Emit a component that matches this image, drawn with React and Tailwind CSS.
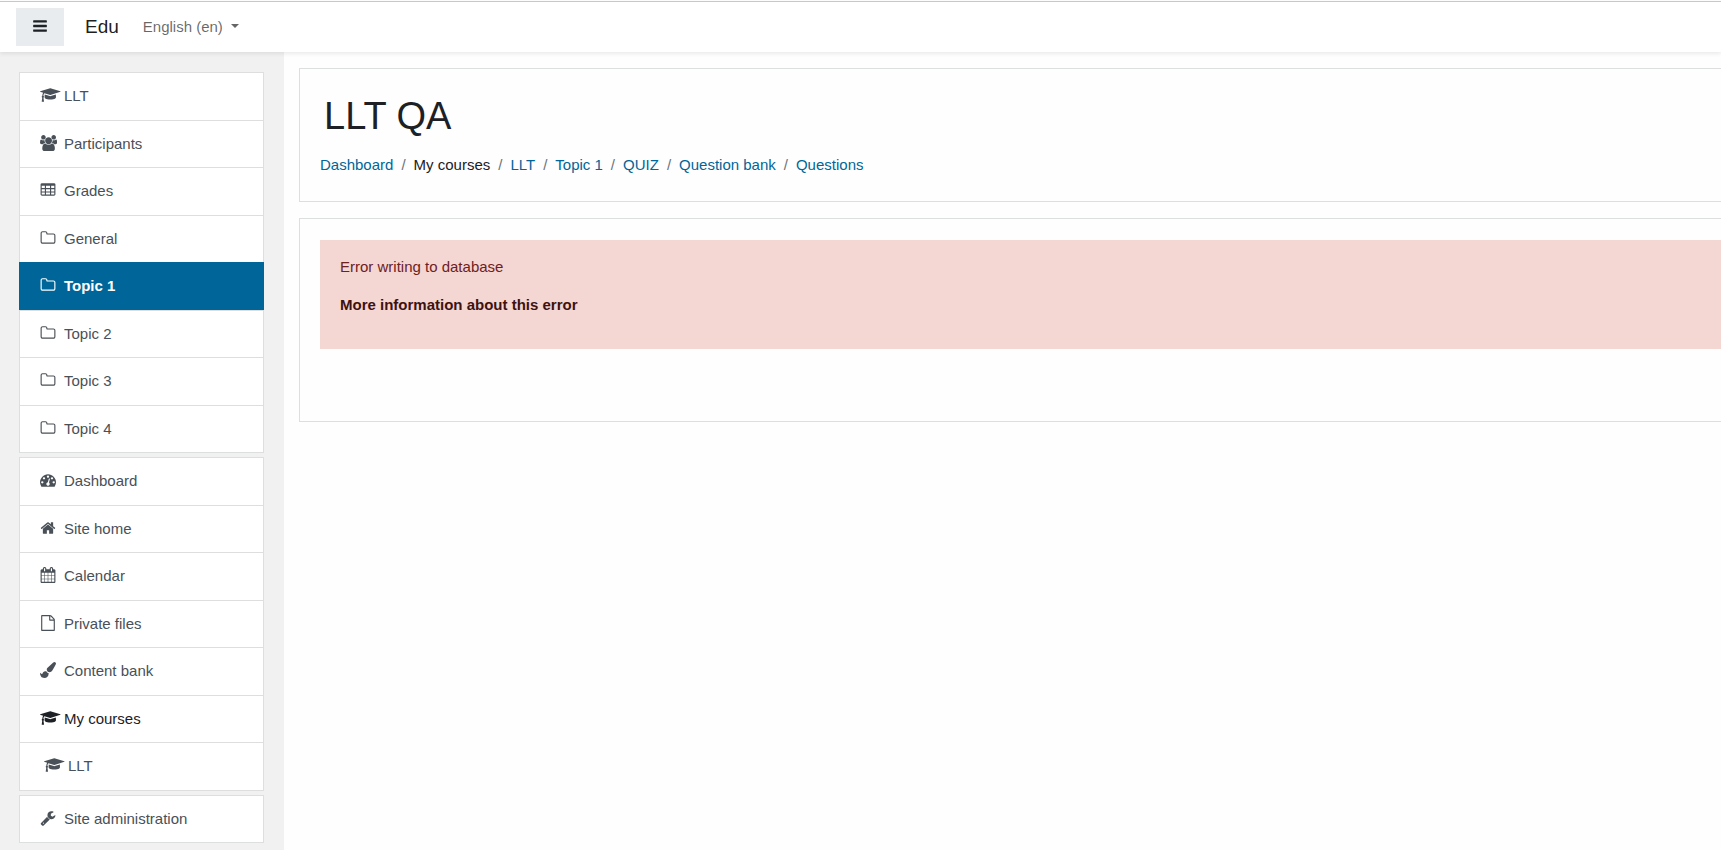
import React from "react";

// Each icon is [viewBox width, path], all on a 1792 unit tall grid
const ICONS = {
  bars: [
    1792,
    "M1664 1344v128q0 26-19 45t-45 19h-1408q-26 0-45-19t-19-45v-128q0-26 19-45t45-19h1408q26 0 45 19t19 45zm0-512v128q0 26-19 45t-45 19h-1408q-26 0-45-19t-19-45v-128q0-26 19-45t45-19h1408q26 0 45 19t19 45zm0-512v128q0 26-19 45t-45 19h-1408q-26 0-45-19t-19-45v-128q0-26 19-45t45-19h1408q26 0 45 19t19 45z",
  ],
  cap: [
    2304,
    "M1774 836l18 316q4 69-82 128t-235 93.5-323 34.5-323-34.5-235-93.5-82-128l18-316 574 181q22 7 48 7t48-7zm530-324q0 23-22 31l-1120 352q-4 1-10 1t-10-1l-652-206q-43 34-71 111.5t-34 178.5q63 36 63 109 0 69-58 107l58 433q2 14-8 25-9 11-24 11h-192q-15 0-24-11-10-11-8-25l58-433q-58-38-58-107 0-73 65-111 11-207 98-330l-333-104q-22-8-22-31t22-31l1120-352q4-1 10-1t10 1l1120 352q22 8 22 31z",
  ],
  users: [
    1920,
    "M593 896q-162 5-265 128h-134q-82 0-138-40.5t-56-118.5q0-353 124-353 6 0 43.5 21t97.5 42.5 119 21.5q67 0 133-23-5 37-5 66 0 139 81 256zm1071 637q0 120-73 189.5t-194 69.5h-874q-121 0-194-69.5t-73-189.5q0-53 3.5-103.5t14-109 26.5-108.5 43-97.5 62-81 85.5-53.5 111.5-20q10 0 43 21.5t73 48 107 48 135 21.5 135-21.5 107-48 73-48 43-21.5q61 0 111.5 20t85.5 53.5 62 81 43 97.5 26.5 108.5 14 109 3.5 103.5zm-1024-1277q0 106-75 181t-181 75-181-75-75-181 75-181 181-75 181 75 75 181zm704 384q0 159-112.5 271.5t-271.5 112.5-271.5-112.5-112.5-271.5 112.5-271.5 271.5-112.5 271.5 112.5 112.5 271.5zm576 225q0 78-56 118.5t-138 40.5h-134q-103-123-265-128 81-117 81-256 0-29-5-66 66 23 133 23 59 0 119-21.5t97.5-42.5 43.5-21q124 0 124 353zm-128-609q0 106-75 181t-181 75-181-75-75-181 75-181 181-75 181 75 75 181z",
  ],
  table: [
    1792,
    "M224 128h1344q66 0 113 47t47 113v1088q0 66-47 113t-113 47h-1344q-66 0-113-47t-47-113v-1088q0-66 47-113t113-47zM192 416v256h352v-256zM672 416v256h448v-256zM1248 416v256h352v-256zM192 800v256h352v-256zM672 800v256h448v-256zM1248 800v256h352v-256zM192 1184v224h352v-224zM672 1184v224h448v-224zM1248 1184v224h352v-224z",
  ],
  folder: [
    1792,
    "M1600 1312v-704q0-40-28-68t-68-28h-704q-40 0-68-28t-28-68v-64q0-40-28-68t-68-28h-320q-40 0-68 28t-28 68v960q0 40 28 68t68 28h1216q40 0 68-28t28-68zm128-704v704q0 92-66 158t-158 66h-1216q-92 0-158-66t-66-158v-960q0-92 66-158t158-66h320q92 0 158 66t66 158v32h672q92 0 158 66t66 158z",
  ],
  gauge: [
    1792,
    "M384 1152q0-53-37.5-90.5t-90.5-37.5-90.5 37.5-37.5 90.5 37.5 90.5 90.5 37.5 90.5-37.5 37.5-90.5zm192-448q0-53-37.5-90.5t-90.5-37.5-90.5 37.5-37.5 90.5 37.5 90.5 90.5 37.5 90.5-37.5 37.5-90.5zm428 481l101-382q6-26-7.5-48.5t-38.5-29.5-48 6.5-30 39.5l-101 382q-60 5-107 43.5t-63 98.5q-20 77 20 146t117 89 146-20 89-117q16-60-6-117t-72-91zm660-33q0-53-37.5-90.5t-90.5-37.5-90.5 37.5-37.5 90.5 37.5 90.5 90.5 37.5 90.5-37.5 37.5-90.5zm-640-640q0-53-37.5-90.5t-90.5-37.5-90.5 37.5-37.5 90.5 37.5 90.5 90.5 37.5 90.5-37.5 37.5-90.5zm448 192q0-53-37.5-90.5t-90.5-37.5-90.5 37.5-37.5 90.5 37.5 90.5 90.5 37.5 90.5-37.5 37.5-90.5zm320 448q0 261-141 483-19 29-54 29h-1402q-35 0-54-29-141-221-141-483 0-182 71-348t191-286 286-191 348-71 348 71 286 191 191 286 71 348z",
  ],
  home: [
    1792,
    "M1472 992v480q0 26-19 45t-45 19h-384v-384h-256v384h-384q-26 0-45-19t-19-45v-480q0-1 .5-3t.5-3l575-474 575 474q1 2 1 6zm223-69l-62 74q-8 9-21 11h-3q-13 0-21-7l-692-577-692 577q-12 8-24 7-13-2-21-11l-62-74q-8-10-7-23.5t11-21.5l719-599q32-26 76-26t76 26l244 204v-195q0-14 9-23t23-9h192q14 0 23 9t9 23v408l219 182q10 8 11 21.5t-7 23.5z",
  ],
  calendar: [
    1792,
    "M192 1664h288v-288h-288v288zm352 0h320v-288h-320v288zm-352-352h288v-320h-288v320zm352 0h320v-320h-320v320zm-352-384h288v-288h-288v288zm736 736h320v-288h-320v288zm-384-736h320v-288h-320v288zm768 736h288v-288h-288v288zm-384-352h320v-320h-320v320zm-352-864v-288q0-13-9.5-22.5t-22.5-9.5h-64q-13 0-22.5 9.5t-9.5 22.5v288q0 13 9.5 22.5t22.5 9.5h64q13 0 22.5-9.5t9.5-22.5zm736 864h288v-320h-288v320zm-384-384h320v-288h-320v288zm384 0h288v-288h-288v288zm32-480v-288q0-13-9.5-22.5t-22.5-9.5h-64q-13 0-22.5 9.5t-9.5 22.5v288q0 13 9.5 22.5t22.5 9.5h64q13 0 22.5-9.5t9.5-22.5zm384-64v1280q0 52-38 90t-90 38h-1408q-52 0-90-38t-38-90v-1280q0-52 38-90t90-38h128v-96q0-66 47-113t113-47h64q66 0 113 47t47 113v96h384v-96q0-66 47-113t113-47h64q66 0 113 47t47 113v96h128q52 0 90 38t38 90z",
  ],
  file: [
    1792,
    "M1596 380q28 28 48 76t20 88v1152q0 40-28 68t-68 28h-1344q-40 0-68-28t-28-68v-1600q0-40 28-68t68-28h896q40 0 88 20t76 48zm-444-244v376h376q-10-29-22-41l-313-313q-12-12-41-22zm384 1528v-1024h-416q-40 0-68-28t-28-68v-416h-768v1536h1280z",
  ],
  brush: [
    1792,
    "M1615 0q70 0 122.5 46.5t52.5 116.5q0 63-45 151-332 629-465 752-97 91-218 91-126 0-216.5-92.5t-90.5-219.5q0-128 92-212l638-579q59-54 130-54zm-909 1034q39 76 106.5 130t150.5 76l1 71q4 213-129.5 347t-348.5 134q-123 0-218-46.5t-152.5-127.5-86.5-183-29-220q7 5 41 30t62 44.5 59 36.5 46 17q41 0 55-37 25-66 57.5-112.5t69.5-76 88-47.5 103-25.5 125-10.5z",
  ],
  wrench: [
    1792,
    "M448 1472q0-26-19-45t-45-19-45 19-19 45 19 45 45 19 45-19 19-45zm644-420l-682 682q-37 37-90 37-52 0-91-37l-106-108q-38-36-38-90 0-53 38-91l681-681q39 98 114.5 173.5t173.5 114.5zm634-435q0 39-23 106-47 134-164.5 217.5t-258.5 83.5q-185 0-316.5-131.5t-131.5-316.5 131.5-316.5 316.5-131.5q58 0 121.5 16.5t107.5 46.5q16 11 16 28t-16 28l-293 169v224l193 107q5-3 79-48.5t135.5-81 70.5-35.5q15 0 23.5 10t8.5 25z",
  ],
};

const Icon = ({ name }) => {
  const [width, path] = ICONS[name];
  return (
    <span className="flex w-4 h-4 mb-0.5 shrink-0">
      <svg
        viewBox={`0 0 ${width} 1792`}
        className="h-4 w-auto max-w-none shrink-0"
        fill="currentColor"
        fillRule="evenodd"
        aria-hidden="true"
      >
        <path d={path} />
      </svg>
    </span>
  );
};

const NAV_GROUPS = [
  [
    { icon: "cap", label: "LLT" },
    { icon: "users", label: "Participants" },
    { icon: "table", label: "Grades" },
    { icon: "folder", label: "General" },
    { icon: "folder", label: "Topic 1", active: true },
    { icon: "folder", label: "Topic 2" },
    { icon: "folder", label: "Topic 3" },
    { icon: "folder", label: "Topic 4" },
  ],
  [
    { icon: "gauge", label: "Dashboard" },
    { icon: "home", label: "Site home" },
    { icon: "calendar", label: "Calendar" },
    { icon: "file", label: "Private files" },
    { icon: "brush", label: "Content bank" },
    { icon: "cap", label: "My courses", plain: true },
    { icon: "cap", label: "LLT", nested: true },
  ],
  [{ icon: "wrench", label: "Site administration" }],
];

const CRUMBS = [
  { label: "Dashboard", link: true },
  { label: "My courses" },
  { label: "LLT", link: true },
  { label: "Topic 1", link: true },
  { label: "QUIZ", link: true },
  { label: "Question bank", link: true },
  { label: "Questions", link: true },
];

const NavItem = ({ icon, label, active, plain, nested }) => {
  let look = "text-[#495057]";
  // the active row also covers the borders above and beside it
  if (active) look = "bg-[#006699] bg-clip-padding text-white font-bold -mx-px -mt-px px-px pt-px";
  if (plain) look = "text-[#1d2125]";

  const row = (
    <span className={`flex items-center gap-2 py-3 pr-5 ${nested ? "pl-6" : "pl-5"}`}>
      <Icon name={icon} />
      <span>{label}</span>
    </span>
  );

  return (
    <li className={`border-b border-[#dddede] ${look}`}>
      {plain ? row : <a href="#" className="block">{row}</a>}
    </li>
  );
};

const Navbar = () => (
  <header className="relative z-10 flex items-center h-[51px] pl-4 bg-white border-t border-[#c8c8c8] shadow-[0_2px_4px_rgba(0,0,0,0.08)]">
    <button
      type="button"
      aria-label="Side panel"
      className="flex items-center justify-center w-12 h-[38px] bg-[#e9ecef] text-[#1d2125]"
    >
      <Icon name="bars" />
    </button>
    <a href="#" className="ml-[21px] text-[19px] text-black/90">
      Edu
    </a>
    <button type="button" className="flex items-center gap-2 ml-6 text-black/60">
      English (en)
      <svg viewBox="0 0 8 4" className="w-2 h-1 mb-0.5" fill="currentColor" aria-hidden="true">
        <path d="M0 0h8L4 4z" />
      </svg>
    </button>
  </header>
);

const Sidebar = () => (
  <nav className="flex flex-col gap-1 w-[284px] shrink-0 pt-5 pb-4 pl-[19px] pr-5 bg-[#f1f1f1]">
    {NAV_GROUPS.map((items, i) => (
      <ul key={i} className="bg-white border-x border-t border-[#dddede]">
        {items.map((item) => (
          <NavItem key={item.label} {...item} />
        ))}
      </ul>
    ))}
  </nav>
);

const PageHeader = () => (
  <section className="px-5 pt-6 pb-6 border-y border-l border-[#dddede]">
    <h1 className="pl-1 text-[38px] leading-[47px]">LLT QA</h1>
    <ol className="flex flex-wrap pt-3.5">
      {CRUMBS.map(({ label, link }, i) => (
        <li key={label} className="flex">
          {i > 0 && <span className="px-2 text-[#6a737b]">/</span>}
          {link ? (
            <a href="#" className="text-[#006699]">
              {label}
            </a>
          ) : (
            <span>{label}</span>
          )}
        </li>
      ))}
    </ol>
  </section>
);

const ErrorPanel = () => (
  <section className="pt-[21px] pl-5 pb-[72px] border-y border-l border-[#dddede]">
    <div role="alert" className="px-5 pt-4 pb-8 bg-[#f4d6d2] text-[#6e211e]">
      <p className="mb-4">Error writing to database</p>
      <p>
        <a href="#" className="font-bold text-[#3d1211]">
          More information about this error
        </a>
      </p>
    </div>
  </section>
);

const App = () => {
  return (
    <div className="flex flex-col min-h-screen pt-px bg-[#fefefe] font-['Liberation_Sans',Arial,sans-serif] text-[15px] leading-normal text-[#1d2125]">
      <Navbar />
      <div className="flex flex-1">
        <Sidebar />
        <main className="flex flex-col gap-4 flex-1 min-w-0 pt-4 pl-[15px]">
          <PageHeader />
          <ErrorPanel />
        </main>
      </div>
    </div>
  );
};

export default App;
